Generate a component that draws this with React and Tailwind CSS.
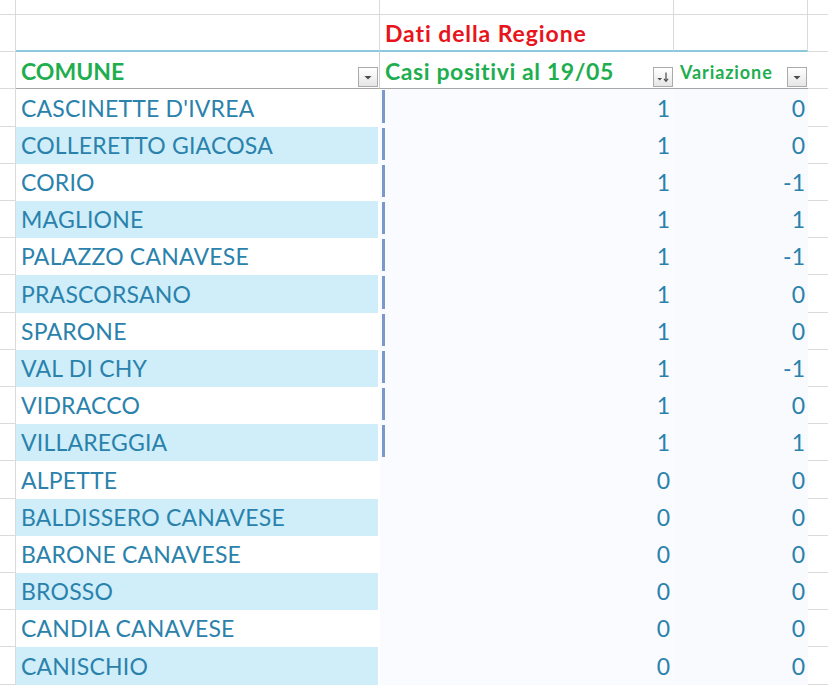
import React from "react";

const rows = [
  ["CASCINETTE D'IVREA", 1, 0],
  ["COLLERETTO GIACOSA", 1, 0],
  ["CORIO", 1, -1],
  ["MAGLIONE", 1, 1],
  ["PALAZZO CANAVESE", 1, -1],
  ["PRASCORSANO", 1, 0],
  ["SPARONE", 1, 0],
  ["VAL DI CHY", 1, -1],
  ["VIDRACCO", 1, 0],
  ["VILLAREGGIA", 1, 1],
  ["ALPETTE", 0, 0],
  ["BALDISSERO CANAVESE", 0, 0],
  ["BARONE CANAVESE", 0, 0],
  ["BROSSO", 0, 0],
  ["CANDIA CANAVESE", 0, 0],
  ["CANISCHIO", 0, 0],
];

function FilterButton() {
  return (
    <div className="w-[20px] h-[20px] border border-[#ababab] bg-gradient-to-b from-[#ffffff] to-[#e6e6e6] flex items-center justify-center">
      <svg width="10" height="10" viewBox="0 0 10 10">
        <path d="M1.5 4 L8.5 4 L5 7.5 Z" fill="#4a4a4a" />
      </svg>
    </div>
  );
}

function SortButton() {
  return (
    <div className="w-[20px] h-[20px] border border-[#ababab] bg-gradient-to-b from-[#ffffff] to-[#e6e6e6] flex items-center justify-center">
      <svg width="14" height="14" viewBox="0 0 14 14">
        <path d="M1.5 8 L6 8 L3.75 10.5 Z" fill="#4a4a4a" />
        <path d="M10 2.5 L10 11" stroke="#4a4a4a" strokeWidth="1.2" />
        <path d="M8 8.8 L10 11.2 L12 8.8" stroke="#4a4a4a" strokeWidth="1.2" fill="none" />
      </svg>
    </div>
  );
}

export default function App() {
  return (
    <div className="w-[828px] h-[685px] overflow-hidden bg-white font-['Lato',sans-serif] text-[#2a82ac]">
      {/* row 1 */}
      <div className="flex h-[15px]">
        <div className="w-[16px] border-r border-b border-[#dadada]" />
        <div className="w-[364px] border-r border-b border-[#dadada]" />
        <div className="w-[294px] border-r border-b border-[#dadada]" />
        <div className="w-[134px] border-r border-b border-[#dadada]" />
        <div className="flex-1 border-b border-[#dadada]" />
      </div>
      {/* row 2 */}
      <div className="flex h-[37px]">
        <div className="w-[16px] border-r border-b border-[#dadada]" />
        <div className="w-[364px] border-r border-r-[#dadada] border-b-2 border-b-[#8cc8df]" />
        <div className="w-[294px] border-r border-r-[#dadada] border-b-2 border-b-[#8cc8df] flex items-center pl-[5px] pt-[2px]">
          <span className="text-[23px] leading-[23px] font-bold text-[#e8141c] tracking-[0.9px]">Dati della Regione</span>
        </div>
        <div className="w-[134px] border-r border-r-[#dadada] border-b-2 border-b-[#8cc8df]" />
        <div className="flex-1 border-b border-[#dadada]" />
      </div>
      {/* header row */}
      <div className="flex h-[37px]">
        <div className="w-[16px] border-r border-b border-[#dadada]" />
        <div className="w-[364px] border-r border-r-[#d0d0d0] border-b border-b-[#a6a6a6] flex items-center justify-between pl-[5px] pr-[1px]">
          <span className="text-[23px] leading-[23px] font-bold text-[#1fae4f] pt-[2px]">COMUNE</span>
          <div className="self-end mb-[1px]"><FilterButton /></div>
        </div>
        <div className="w-[294px] border-b border-[#a6a6a6] flex items-center justify-between pl-[5px] pr-[1px]">
          <span className="text-[23px] leading-[23px] font-bold text-[#1fae4f] pt-[2px] tracking-[0.6px]">Casi positivi al 19/05</span>
          <div className="self-end mb-[1px]"><SortButton /></div>
        </div>
        <div className="w-[134px] border-b border-[#a6a6a6] flex items-center justify-between pl-[6px] pr-[1px]">
          <span className="text-[18px] leading-[18px] font-bold text-[#1fae4f] pt-[4px] tracking-[0.9px]">Variazione</span>
          <div className="self-end mb-[1px]"><FilterButton /></div>
        </div>
        <div className="flex-1 border-b border-[#dadada]" />
      </div>
      {/* data */}
      {rows.map(([name, a, b], i) => (
        <div key={name} className={`flex ${i % 5 === 0 ? "h-[38px]" : "h-[37px]"}`}>
          <div className="w-[16px] border-r border-b border-[#dadada]" />
          <div className="w-[364px] pr-[2px] flex">
            <div className={`flex-1 flex items-center pl-[5px] ${i % 2 === 1 ? "bg-[#cfeef9]" : "bg-white"}`}>
              <span className="text-[23px] leading-[23px] tracking-[0.2px]">{name}</span>
            </div>
          </div>
          <div className="w-[294px] bg-[#fafbfe] flex items-center justify-end pr-[4px] relative">
            {a === 1 && (
              <div className="absolute left-[2px] top-[1px] bottom-[4px] w-[3px] bg-[#7b98cb]" />
            )}
            <span className="text-[23px] leading-[23px]">{a}</span>
          </div>
          <div className="w-[134px] bg-[#f9fafd] flex items-center justify-end pr-[3px]">
            <span className="text-[23px] leading-[23px]">{b}</span>
          </div>
          <div className="flex-1 border-b border-[#dadada]" />
        </div>
      ))}
    </div>
  );
}
